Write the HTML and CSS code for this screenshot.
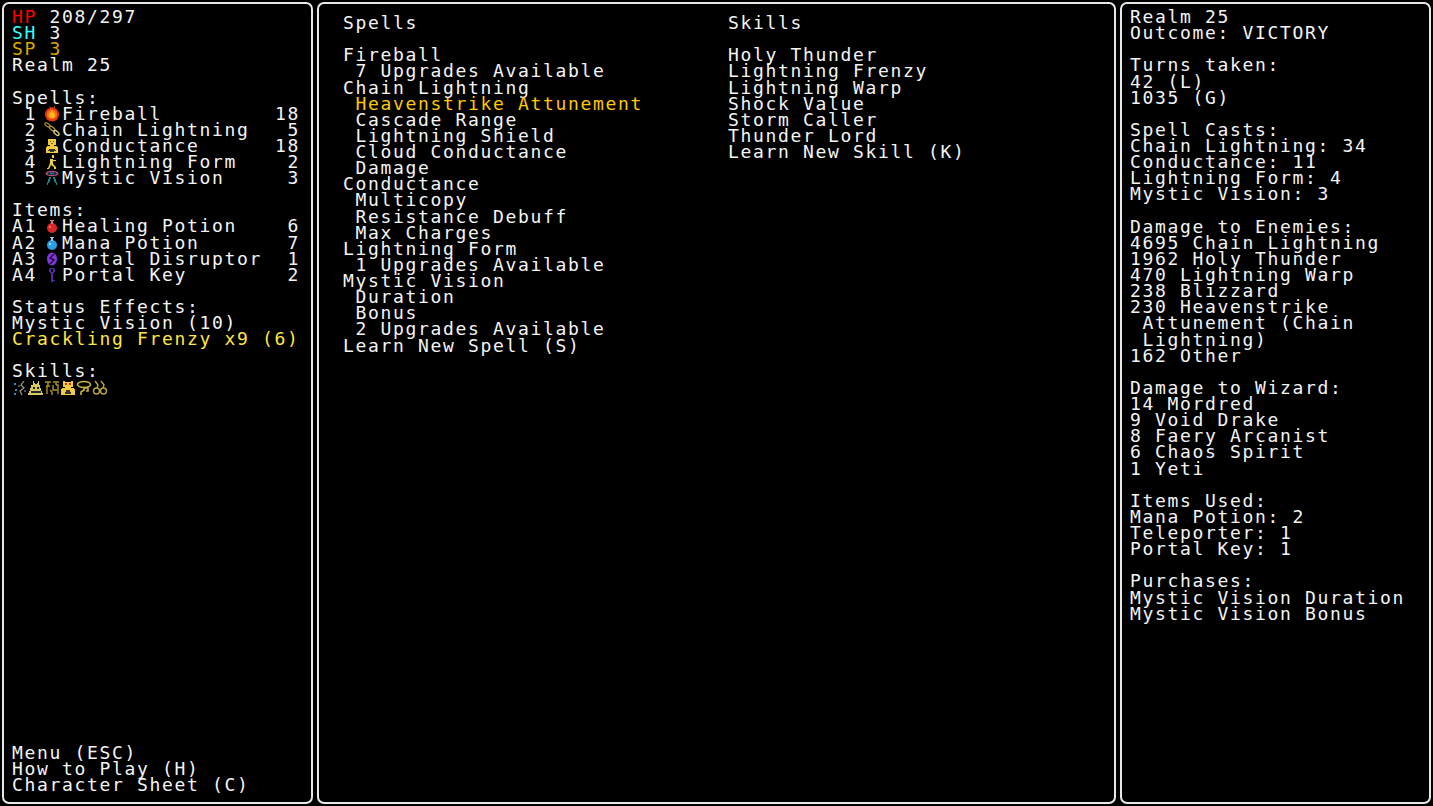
FILE: index.html
```html
<!DOCTYPE html>
<html lang="en">
<head>
	<meta charset="UTF-8">
	<title>Rift Wizard</title>
	<link rel="stylesheet" href="styles.css">
</head>
<body>
	<svg class="defs" width="0" height="0">
		<symbol id="i-fire" viewBox="0 0 16 16">
			<path d="M5 0h1v2h4V0h1v3z" fill="#b8500c"/>
			<circle cx="8" cy="8.5" r="7" fill="#e8380c"/>
			<circle cx="8" cy="8.5" r="5" fill="#f8701a"/>
			<path d="M8 4l1 2 2 2v2l-1 2H6l-1-2V8l2-2z" fill="#ffb81a"/>
		</symbol>
		<symbol id="i-chain" viewBox="0 0 16 16">
			<ellipse cx="3.5" cy="3" rx="3" ry="1.4" transform="rotate(30 3.5 3)" fill="none" stroke="#a88a20" stroke-width="1.2"/>
			<ellipse cx="8" cy="6.5" rx="3.2" ry="1.5" transform="rotate(35 8 6.5)" fill="none" stroke="#c0a030" stroke-width="1.2"/>
			<ellipse cx="12.5" cy="11" rx="3" ry="1.6" transform="rotate(40 12.5 11)" fill="none" stroke="#d8cc90" stroke-width="1.4"/>
		</symbol>
		<symbol id="i-cond" viewBox="0 0 16 16">
			<path d="M4 1h8v6h-2v1h3v1h1v6H2V9h1V8h3V7H4z" fill="#f0cc44"/>
			<path d="M6 3h1v1H6zM9 3h1v1H9zM7 5h2v1H7z" fill="#7a5a10"/>
			<path d="M5 11h6v1h1v1h-2v1H6v-1H4v-1h1z" fill="#33323a"/>
		</symbol>
		<symbol id="i-form" viewBox="0 0 16 16">
			<path d="M8 1h2v3H8zM6 5h3v1h3v1H9v3l3 3v2h-2v-2L7 11l-2 4H3v-1h1l2-5z" fill="#f0cc44"/>
		</symbol>
		<symbol id="i-vision" viewBox="0 0 16 16">
			<ellipse cx="8" cy="3.5" rx="6.5" ry="2.8" fill="#b84876"/>
			<ellipse cx="8" cy="3.5" rx="4.5" ry="1.6" fill="#10242c"/>
			<path d="M6 2.5h4v2H6z" fill="#1c7088"/>
			<path d="M5 7h2v2H6v3H5v1H4v2H3v-3h1V9h1zM9 7h2v2h1v3h1v3h-1v-2h-1v-1h-1V9H9z" fill="#168484"/>
		</symbol>
		<symbol id="i-heal" viewBox="0 0 16 16">
			<circle cx="8" cy="10" r="5" fill="#d8262c"/>
			<path d="M6 2h4v1H9v3H7V3H6z" fill="#c87878"/>
			<path d="M5 8h2v2H5z" fill="#f86a60"/>
		</symbol>
		<symbol id="i-mana" viewBox="0 0 16 16">
			<circle cx="8" cy="10" r="5" fill="#2c9ee8"/>
			<path d="M6 2h4v1H9v3H7V3H6z" fill="#9cc8e4"/>
			<path d="M5 8h2v2H5z" fill="#8cdcff"/>
		</symbol>
		<symbol id="i-disrupt" viewBox="0 0 16 16">
			<ellipse cx="8" cy="8" rx="5" ry="6.5" fill="#8434e0"/>
			<path d="M10 3L6 7l4 2-4 4" fill="none" stroke="#1c0c38" stroke-width="1.4"/>
		</symbol>
		<symbol id="i-key" viewBox="0 0 16 16">
			<path d="M6 1h4v1h1v3h-1v1H9v7h2v1H9v1H7V6H6V5H5V2h1zM7 2v3h2V2z" fill="#5428a8" fill-rule="evenodd"/>
		</symbol>
		<symbol id="i-s1" viewBox="0 0 16 16">
			<path d="M2 3h2v2H2zM3 9h2v2H3zM2 13h2v2H2z" fill="#2f8fbf"/>
			<path d="M12 1L9 5l3 3-4 3 2 4M6 6h2M12 11h2" fill="none" stroke="#a0a090" stroke-width="1.2"/>
		</symbol>
		<symbol id="i-s2" viewBox="0 0 16 16">
			<path d="M5 1h1v2h1v1h2V3h1V1h1v4h1v3h1v3h1v2h1v2H0v-2h1v-2h1V8h1V5h2z" fill="#d8c860"/>
			<path d="M5 7h2v2H5zM9 7h2v2H9zM3 11h10v2H3z" fill="#26262e"/>
		</symbol>
		<symbol id="i-s3" viewBox="0 0 16 16">
			<path d="M1 2h6M4 2v4M2 6h4M3 6v8M9 2h6M12 2v3M9 5v5h4M12 5h2v9M6 10l2 2v3" fill="none" stroke="#a89428" stroke-width="1.4"/>
		</symbol>
		<symbol id="i-s4" viewBox="0 0 16 16">
			<path d="M3 1h2v1h6V1h2v6h-2v1h3v1h1v6H1V9h1V8h3V7H3z" fill="#f0cc44"/>
			<path d="M5 3h2v2H5zM9 3h2v2H9z" fill="#c8321e"/>
			<path d="M6 10h4v2h1v2H5v-2h1z" fill="#33333a"/>
		</symbol>
		<symbol id="i-s5" viewBox="0 0 16 16">
			<ellipse cx="8" cy="4.5" rx="6.5" ry="3" fill="none" stroke="#c8b440" stroke-width="1.6"/>
			<path d="M8 7v3l-3 2v3M9 8h3v3h-2" fill="none" stroke="#c8b440" stroke-width="1.6"/>
		</symbol>
		<symbol id="i-s6" viewBox="0 0 16 16">
			<circle cx="4.5" cy="11" r="3" fill="none" stroke="#b8a444" stroke-width="1.4"/>
			<circle cx="11.5" cy="11" r="3" fill="none" stroke="#b8a444" stroke-width="1.4"/>
			<path d="M3 1l3 4-1 3M9 1l3 4-1 3" fill="none" stroke="#b8a444" stroke-width="1.4"/>
		</symbol>
	</svg>

	<div class="panel side">
		<div class="line"><span class="hp">HP</span> 208/297</div>
		<div class="line"><span class="sh">SH</span> 3</div>
		<div class="line sp">SP 3</div>
		<div class="line">Realm 25</div>
		<div class="line blank"></div>
		<div class="line">Spells:</div>
		<div class="row"><span class="key">1</span><svg class="icon"><use href="#i-fire"/></svg><span class="name">Fireball</span><span>18</span></div>
		<div class="row"><span class="key">2</span><svg class="icon"><use href="#i-chain"/></svg><span class="name">Chain Lightning</span><span>5</span></div>
		<div class="row"><span class="key">3</span><svg class="icon"><use href="#i-cond"/></svg><span class="name">Conductance</span><span>18</span></div>
		<div class="row"><span class="key">4</span><svg class="icon"><use href="#i-form"/></svg><span class="name">Lightning Form</span><span>2</span></div>
		<div class="row"><span class="key">5</span><svg class="icon"><use href="#i-vision"/></svg><span class="name">Mystic Vision</span><span>3</span></div>
		<div class="line blank"></div>
		<div class="line">Items:</div>
		<div class="row"><span class="key">A1</span><svg class="icon"><use href="#i-heal"/></svg><span class="name">Healing Potion</span><span>6</span></div>
		<div class="row"><span class="key">A2</span><svg class="icon"><use href="#i-mana"/></svg><span class="name">Mana Potion</span><span>7</span></div>
		<div class="row"><span class="key">A3</span><svg class="icon"><use href="#i-disrupt"/></svg><span class="name">Portal Disruptor</span><span>1</span></div>
		<div class="row"><span class="key">A4</span><svg class="icon"><use href="#i-key"/></svg><span class="name">Portal Key</span><span>2</span></div>
		<div class="line blank"></div>
		<div class="line">Status Effects:</div>
		<div class="line">Mystic Vision (10)</div>
		<div class="line frenzy">Crackling Frenzy x9 (6)</div>
		<div class="line blank"></div>
		<div class="line">Skills:</div>
		<div class="skills">
			<svg class="skill"><use href="#i-s1"/></svg>
			<svg class="skill"><use href="#i-s2"/></svg>
			<svg class="skill"><use href="#i-s3"/></svg>
			<svg class="skill"><use href="#i-s4"/></svg>
			<svg class="skill"><use href="#i-s5"/></svg>
			<svg class="skill"><use href="#i-s6"/></svg>
		</div>
		<div class="foot">
			<div class="line">Menu (ESC)</div>
			<div class="line">How to Play (H)</div>
			<div class="line">Character Sheet (C)</div>
		</div>
	</div>

	<div class="panel middle">
		<pre class="col">Spells

Fireball
 7 Upgrades Available
Chain Lightning
 <span class="picked">Heavenstrike Attunement</span>
 Cascade Range
 Lightning Shield
 Cloud Conductance
 Damage
Conductance
 Multicopy
 Resistance Debuff
 Max Charges
Lightning Form
 1 Upgrades Available
Mystic Vision
 Duration
 Bonus
 2 Upgrades Available
Learn New Spell (S)</pre>
		<pre class="col">Skills

Holy Thunder
Lightning Frenzy
Lightning Warp
Shock Value
Storm Caller
Thunder Lord
Learn New Skill (K)</pre>
	</div>

	<div class="panel side">
		<pre class="col">Realm 25
Outcome: VICTORY

Turns taken:
42 (L)
1035 (G)

Spell Casts:
Chain Lightning: 34
Conductance: 11
Lightning Form: 4
Mystic Vision: 3

Damage to Enemies:
4695 Chain Lightning
1962 Holy Thunder
470 Lightning Warp
238 Blizzard
230 Heavenstrike
 Attunement (Chain
 Lightning)
162 Other

Damage to Wizard:
14 Mordred
9 Void Drake
8 Faery Arcanist
6 Chaos Spirit
1 Yeti

Items Used:
Mana Potion: 2
Teleporter: 1
Portal Key: 1

Purchases:
Mystic Vision Duration
Mystic Vision Bonus</pre>
	</div>
</body>
</html>
```

FILE: styles.css
```css
* {
	padding: 0;
	margin: 0;
	box-sizing: border-box;
}
html,
body {
	height: 100%;
}
body {
	display: flex;
	gap: 4px;
	padding: 2px;
	background-color: #000;
	color: #f4f4f4;
	font-family: "DejaVu Sans Mono", monospace;
	font-size: 18px;
	letter-spacing: 1.66px;
	line-height: 16.12px;
	overflow: hidden;
}
.defs {
	position: absolute;
}
pre {
	font: inherit;
}
.panel {
	border: 2px solid #e8e8e8;
	border-radius: 7px;
	padding: 5px 8px 9px;
}
.side {
	width: 311px;
	display: flex;
	flex-direction: column;
}
.middle {
	flex: 1;
	display: grid;
	grid-template-columns: 385px 1fr;
	padding: 11px 24px;
}
.line {
	height: 16.12px;
	white-space: pre;
}
.hp {
	color: #f00;
}
.sh {
	color: #3ff;
}
.sp {
	color: #d9a800;
}
.frenzy {
	color: #ffe642;
}
.picked {
	color: #ffc800;
}
.row {
	display: flex;
	height: 16.12px;
	width: 288px;
	white-space: pre;
}
.key {
	width: 25px;
	text-align: right;
}
.icon {
	width: 16px;
	height: 16px;
	margin: 0 2px 0 7px;
}
.name {
	flex: 1;
}
.skills {
	display: flex;
	height: 16px;
}
.skill {
	width: 16px;
	height: 16px;
}
.foot {
	margin-top: auto;
}
```
